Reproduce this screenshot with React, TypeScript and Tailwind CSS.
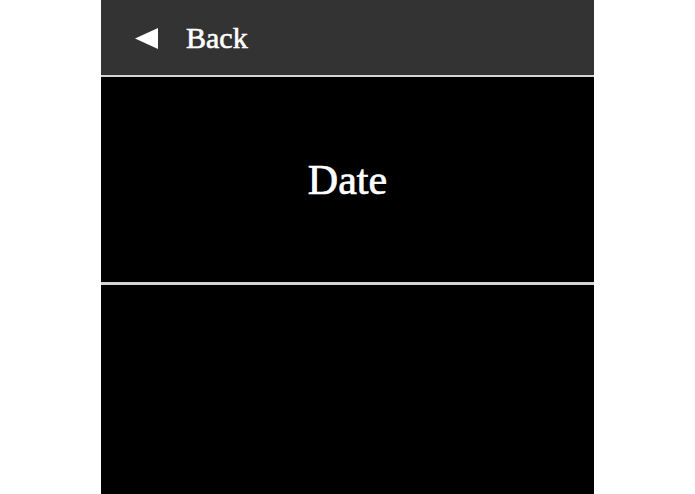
export default function App() {
  return (
    <div className="flex h-[494px] w-[695px] justify-center bg-white" style={{ fontFamily: '"Liberation Serif", serif' }}>
      <div className="flex w-[493px] flex-col bg-black">
        <div className="flex h-[75px] shrink-0 items-center bg-[#333333] pl-[34px] text-white">
          <svg width="23" height="21" viewBox="0 0 23 21" className="mt-[2px]">
            <polygon points="0,10.5 23,0 23,21" fill="white" />
          </svg>
          <span className="ml-[28px] text-[30px] leading-none [-webkit-text-stroke:0.6px_white]">Back</span>
        </div>
        <div className="h-[2px] shrink-0 bg-[#d4d4d4]" />
        <div className="flex h-[205px] shrink-0 items-center justify-center">
          <span className="text-[42px] leading-none text-white [-webkit-text-stroke:0.7px_white]">Date</span>
        </div>
        <div className="h-[3px] shrink-0 bg-[#d4d4d4]" />
        <div className="flex-1" />
      </div>
    </div>
  );
}
